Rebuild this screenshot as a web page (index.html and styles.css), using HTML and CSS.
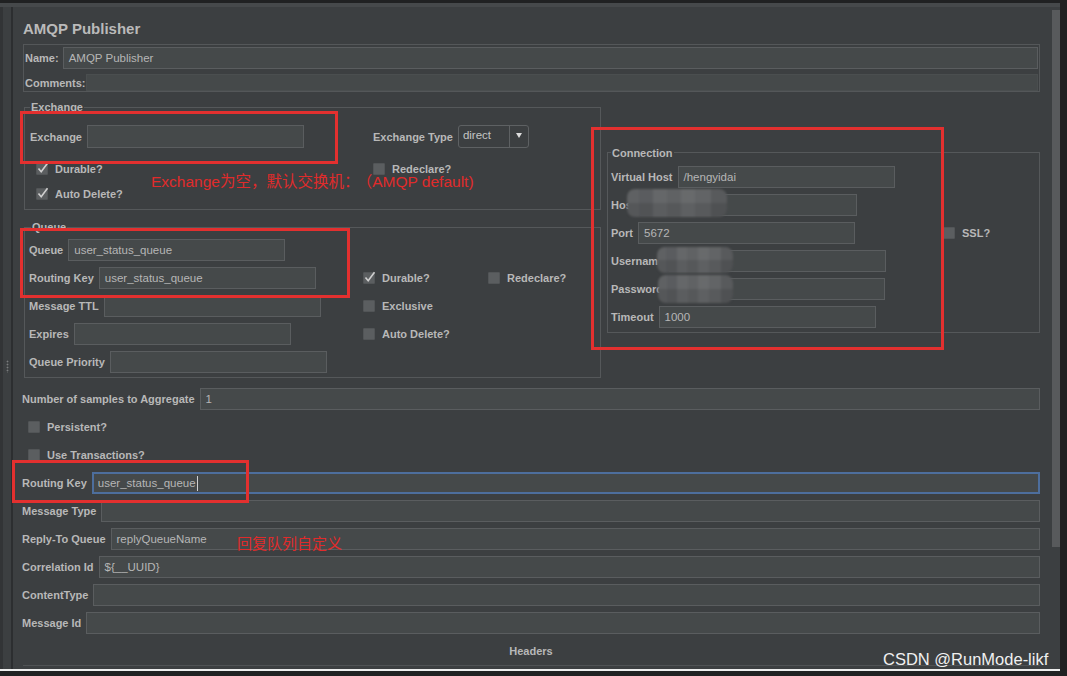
FILE: index.html
```html
<!DOCTYPE html>
<html>
<head>
<meta charset="utf-8">
<title>AMQP Publisher</title>
<link rel="stylesheet" href="styles.css">
</head>
<body>
<div class="screen">
  <div class="window">
    <div class="band"></div>
    <div class="main">
      <div class="strip">
        <div class="strip-edge"></div>
        <div class="strip-body"><div class="grip"></div></div>
        <div class="strip-line"></div>
      </div>
      <div class="content">
        <div class="title">AMQP Publisher</div>
        <div class="namebox">
          <div class="name-row"><span class="lbl">Name:</span><div class="tf grow">AMQP Publisher</div></div>
          <div class="comments-row"><span class="lbl">Comments:</span><div class="ta grow"></div></div>
        </div>

        <div class="section">
          <div class="leftcol">
            <fieldset class="grp exchange">
              <legend>Exchange</legend>
              <div class="ex-grid">
                <div class="field"><span class="lbl">Exchange</span><div class="tf w217 h23"></div></div>
                <div class="field"><span class="lbl">Exchange Type</span>
                  <div class="combo"><span class="combo-val">direct</span><span class="combo-btn"><span class="arrow"></span></span></div>
                </div>
                <div class="cb ind"><span class="box"><svg viewBox="0 0 13 13"><path d="M2.5 6.5 L5.2 9.8 L11.5 1.2" fill="none" stroke="#cfcfcf" stroke-width="1.6"/></svg></span>Durable?</div>
                <div class="cb"><span class="box"></span>Redeclare?</div>
                <div class="cb ind"><span class="box"><svg viewBox="0 0 13 13"><path d="M2.5 6.5 L5.2 9.8 L11.5 1.2" fill="none" stroke="#cfcfcf" stroke-width="1.6"/></svg></span>Auto Delete?</div>
              </div>
            </fieldset>

            <fieldset class="grp queue">
              <legend>Queue</legend>
              <div class="q-grid">
                <div class="field c1"><span class="lbl">Queue</span><div class="tf w217">user_status_queue</div></div>
                <div class="field c1"><span class="lbl">Routing Key</span><div class="tf w217">user_status_queue</div></div>
                <div class="cb c2"><span class="box"><svg viewBox="0 0 13 13"><path d="M2.5 6.5 L5.2 9.8 L11.5 1.2" fill="none" stroke="#cfcfcf" stroke-width="1.6"/></svg></span>Durable?</div>
                <div class="cb c3"><span class="box"></span>Redeclare?</div>
                <div class="field c1"><span class="lbl">Message TTL</span><div class="tf w217"></div></div>
                <div class="cb c2"><span class="box"></span>Exclusive</div>
                <div class="field c1"><span class="lbl">Expires</span><div class="tf w217"></div></div>
                <div class="cb c2"><span class="box"></span>Auto Delete?</div>
                <div class="field c1"><span class="lbl">Queue Priority</span><div class="tf w217"></div></div>
              </div>
            </fieldset>
          </div>

          <fieldset class="grp conn">
            <legend>Connection</legend>
            <div class="c-grid">
              <div class="field c1"><span class="lbl">Virtual Host</span><div class="tf w217">/hengyidai</div></div>
              <div class="field c1"><span class="lbl">Host</span><div class="tf w217"></div></div>
              <div class="field c1"><span class="lbl">Port</span><div class="tf w217">5672</div></div>
              <div class="cb c2"><span class="box"></span>SSL?</div>
              <div class="field c1"><span class="lbl">Username</span><div class="tf w217"></div></div>
              <div class="field c1"><span class="lbl">Password</span><div class="tf w217"></div></div>
              <div class="field c1"><span class="lbl">Timeout</span><div class="tf w217">1000</div></div>
            </div>
          </fieldset>
        </div>

        <div class="rows">
          <div class="field"><span class="lbl">Number of samples to Aggregate</span><div class="tf grow">1</div></div>
          <div class="cb ind"><span class="box"></span>Persistent?</div>
          <div class="cb ind"><span class="box"></span>Use Transactions?</div>
          <div class="field"><span class="lbl">Routing Key</span><div class="tf grow focus">user_status_queue<span class="caret"></span></div></div>
          <div class="field"><span class="lbl">Message Type</span><div class="tf grow"></div></div>
          <div class="field"><span class="lbl">Reply-To Queue</span><div class="tf grow">replyQueueName</div></div>
          <div class="field"><span class="lbl">Correlation Id</span><div class="tf grow">${__UUID}</div></div>
          <div class="field"><span class="lbl">ContentType</span><div class="tf grow"></div></div>
          <div class="field"><span class="lbl">Message Id</span><div class="tf grow"></div></div>
        </div>

        <div class="headers">Headers</div>
        <div class="table"></div>
      </div>
      <div class="scroll"><div class="thumb"></div></div>
    </div>
  </div>

  <div class="blur b-host"></div>
  <div class="blur b-user"></div>
  <div class="blur b-pass"></div>

  <div class="redbox rb1"></div>
  <div class="redbox rb2"></div>
  <div class="redbox rb3"></div>
  <div class="redbox rb4"></div>

  <div class="note n1">Exchange为空，默认交换机：<span class="paren">（AMQP default)</span></div>
  <div class="note n2">回复队列自定义</div>

  <div class="watermark">CSDN @RunMode-likf</div>
</div>
</body>
</html>
```

FILE: styles.css
```css
* { box-sizing: border-box; }
html, body { margin: 0; padding: 0; background: #202122; }
body { font-family: "Liberation Sans", Arial, sans-serif; color: #b8b8b8; }

.screen { position: relative; width: 1067px; height: 676px; overflow: hidden; background: #202122; }
.window { width: 1060px; height: 668px; margin-top: 3px; display: flex; flex-direction: column; background: #3c3f41; border-bottom: 2px solid #eeeeee; }
.band { height: 4px; flex: none; background: #46494b; }
.main { flex: 1; display: flex; min-height: 0; }

.strip { width: 13px; flex: none; display: flex; }
.strip-edge { width: 3px; background: #323436; }
.strip-body { width: 8px; background: #3c3f41; padding-top: 353px; display: flex; justify-content: center; }
.grip { width: 3px; height: 13px; background: radial-gradient(circle, #7a7c7e 0.8px, transparent 1.1px) 0 0 / 3px 3px; }
.strip-line { width: 2px; background: #2c2e30; }

.content { flex: 1; min-width: 0; display: flex; flex-direction: column; padding: 0 12px 0 9px; }
.scroll { width: 8px; flex: none; padding-top: 3px; background: #3c3f41; }
.thumb { height: 537px; background: #585a5c; }

.title { padding: 12px 0 0 1px; font-weight: bold; font-size: 15px; line-height: 19px; color: #bababa; }
.lbl { font-weight: bold; font-size: 11px; line-height: 14px; white-space: nowrap; flex: none; color: #b8b8b8; }

.namebox { margin: 6px 0 0 1px; border: 1px solid #545759; padding: 2px 1px 0 1px; }
.name-row { display: flex; align-items: center; gap: 4px; height: 22px; }
.comments-row { display: flex; align-items: center; height: 17px; margin-top: 5px; }

.tf { height: 22px; border: 1px solid #5a5d5f; background: #45494a; display: flex; align-items: center; padding-left: 5px; font-size: 11.5px; color: #b6b6b6; white-space: nowrap; overflow: hidden; }
.h23 { height: 23px; }
.ta { height: 17px; background: #45494a; border: 1px solid #4a4e4f; }
.grow { flex: 1; min-width: 0; }
.w217 { width: 217px; flex: none; }
.focus { border: 2px solid #4d6e9d; padding-left: 4px; }
.caret { width: 1px; height: 15px; background: #d0d0d0; margin-left: 1px; }

.field { display: flex; align-items: center; gap: 5px; }

.section { display: flex; align-items: center; gap: 6px; margin: 8px 0 0 2px; }
.leftcol { width: 577px; flex: none; display: flex; flex-direction: column; gap: 10px; }

fieldset.grp { margin: 0; border: 1px solid #55585a; min-width: 0; }
.grp legend { padding: 0 1px; font-weight: bold; font-size: 11px; line-height: 14px; color: #b8b8b8; }

.exchange { padding: 11px 5px 5px 5px; }
.ex-grid { display: grid; grid-template-columns: 343px 1fr; grid-template-rows: 23px 31px 25px; align-items: end; }

.queue { padding: 5px 4px 4px 4px; }
.queue legend { margin-left: 2px; }
.q-grid { display: grid; grid-template-columns: 334px 125px auto; grid-auto-rows: 22px; row-gap: 6px; align-items: center; }

.conn { flex: 1; padding: 6px 3px 4px 3px; }
.c-grid { display: grid; grid-template-columns: 332px auto; grid-auto-rows: 22px; row-gap: 6px; align-items: center; }
.c1 { grid-column: 1; }
.c2 { grid-column: 2; }
.c3 { grid-column: 3; }

.cb { display: flex; align-items: center; gap: 7px; height: 20px; font-weight: bold; font-size: 11px; white-space: nowrap; color: #b8b8b8; }
.ind { padding-left: 6px; }
.box { width: 12px; height: 12px; background: #5b5e60; border: 1px solid #525557; border-radius: 1px; position: relative; flex: none; }
.box svg { position: absolute; left: -1px; top: -2px; width: 13px; height: 13px; overflow: visible; }

.combo { width: 71px; height: 23px; border: 1px solid #5e6163; border-radius: 3px; display: flex; font-size: 11.5px; color: #c4c4c4; }
.combo-val { flex: 1; padding: 2px 0 0 4px; line-height: 14px; }
.combo-btn { width: 19px; border-left: 1px solid #5e6163; display: flex; align-items: center; justify-content: center; }
.arrow { width: 0; height: 0; border-left: 3.5px solid transparent; border-right: 3.5px solid transparent; border-top: 5px solid #dddddd; margin-top: -2px; }

.rows { display: flex; flex-direction: column; gap: 6px; margin-top: 10px; }
.rows .field { height: 22px; }
.rows .cb { height: 22px; }

.headers { margin-top: 10px; text-align: center; font-weight: bold; font-size: 11px; line-height: 14px; }
.table { margin: 7px 0 0 1px; flex: 1; border-top: 1px solid #505355; }

/* annotations over the screenshot */
.redbox { position: absolute; border: 3px solid #e3302f; }
.rb1 { left: 20px; top: 111px; width: 318px; height: 53px; }
.rb2 { left: 20px; top: 228px; width: 330px; height: 70px; }
.rb3 { left: 591px; top: 127px; width: 353px; height: 223px; }
.rb4 { left: 12px; top: 460px; width: 237px; height: 43px; }

.note { position: absolute; color: #e02b2b; font-family: "Liberation Sans", "Noto Sans CJK SC", sans-serif; font-size: 15px; line-height: 18px; white-space: nowrap; }
.n1 { left: 151px; top: 174px; font-size: 15.5px; line-height: 15px; }
.paren { margin-left: 5px; }
.n2 { left: 237px; top: 535px; }

.blur { position: absolute; border-radius: 8px; filter: blur(1px);
  background:
    linear-gradient(180deg, rgba(255,255,255,0.03) 0 50%, rgba(0,0,0,0.05) 50% 100%),
    linear-gradient(90deg, #5a5c5e 0 12%, #55575a 12% 26%, #606264 26% 40%, #5b5d5f 40% 54%, #636567 54% 68%, #5d5f61 68% 84%, #535557 84% 100%); }
.b-host { left: 627px; top: 189px; width: 100px; height: 28px; }
.b-user { left: 657px; top: 247px; width: 76px; height: 26px; }
.b-pass { left: 658px; top: 275px; width: 75px; height: 28px; }

.watermark { position: absolute; left: 883px; top: 650px; font-size: 16.5px; line-height: 18px; color: #f0f0f0; font-family: "Liberation Sans", Arial, sans-serif; white-space: nowrap; }
```
